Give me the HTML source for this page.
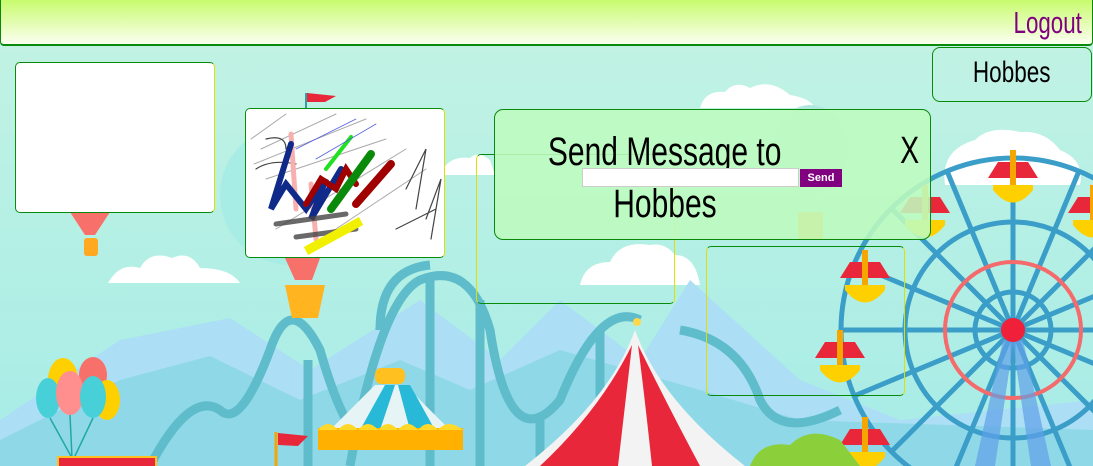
<!DOCTYPE html>
<html><head><meta charset="utf-8"><style>
html,body{margin:0;padding:0;width:1093px;height:466px;overflow:hidden;font-family:"Liberation Sans",sans-serif}
#bg{position:absolute;left:0;top:0;display:block}
.hdr{position:absolute;left:0;top:0;width:1093px;height:46px;box-sizing:border-box;border:1px solid #0a8a0a;border-top:none;border-bottom:2px solid #0a8a0a;border-radius:0 0 4px 4px;background:linear-gradient(#c8fb6e,#fbfff0)}
.logout{position:absolute;right:10px;top:5px;font-size:31px;color:#800080;transform:scaleX(.72);transform-origin:right}
.box{position:absolute;border:1px solid #0a8a0a;border-radius:5px;box-sizing:border-box}
.hand{font-family:"Liberation Sans",sans-serif;transform:scaleX(.75);display:inline-block}
</style></head><body>
<svg id="bg" width="1093" height="466" viewBox="0 0 1093 466">
<defs><linearGradient id="sky" x1="0" y1="0" x2="0" y2="1"><stop offset="0" stop-color="#c4f3e4"/><stop offset="1" stop-color="#a6ece6"/></linearGradient></defs>
<rect width="1093" height="466" fill="url(#sky)"/>
<circle cx="290" cy="195" r="70" fill="#a8ece6"/>
<g fill="#fff">
<path d="M108 283 Q120 262 140 268 Q150 250 172 258 Q190 250 200 268 Q230 268 240 283Z"/>
<path d="M580 285 Q585 262 610 262 Q620 240 650 245 Q665 242 675 255 Q695 255 700 285Z"/>
<path d="M700 108 Q705 90 725 92 Q735 80 750 88 Q770 78 790 95 Q810 98 815 108Z"/>
<path d="M945 185 Q940 150 975 140 Q990 125 1020 132 Q1045 130 1060 150 Q1085 160 1080 185Z"/>
<path d="M440 175 Q448 155 470 158 Q478 150 490 160 L495 175Z"/>
</g>
<path d="M0 466 L0 420 L120 340 L230 318 L310 370 L420 300 L500 360 L560 300 L640 360 L690 280 L800 380 L900 420 L1093 400 L1093 466Z" fill="#acdff5"/>
<path d="M0 466 L0 440 L120 380 L210 356 L300 400 L400 360 L470 390 L560 350 L700 390 L800 420 L1093 430 L1093 466Z" fill="#8fd8e8"/>
<g fill="none" stroke="#5fbccb" stroke-width="9">
<path d="M150 466 Q190 390 220 410 Q240 430 270 350 Q290 290 320 350 Q340 420 360 440"/>
<path d="M350 466 Q380 300 420 280 Q470 260 490 330 Q510 460 560 400 Q600 300 640 320"/>
<path d="M380 330 Q380 270 430 265"/>
<path d="M680 330 Q740 340 760 400 Q780 440 840 410"/>
<path d="M430 280 L430 466 M480 300 L480 466 M308 360 L308 466 M540 420 L540 466 M600 330 L600 466"/>
</g>
<g stroke="#3a9ec8" stroke-width="5" fill="none">
<circle cx="1013" cy="330" r="172"/>
<circle cx="1013" cy="330" r="108"/>
<circle cx="1013" cy="330" r="38"/>
<path d="M1013 158V502M841 330H1185M891 208L1135 452M891 452L1135 208M947 171L1079 489M947 489L1079 171M854 264L1172 396M854 396L1172 264"/>
</g>
<circle cx="1013" cy="330" r="68" fill="none" stroke="#f56a6a" stroke-width="4"/>
<path d="M1003 340 L975 466 L995 466 L1013 345 L1031 466 L1051 466 L1023 340Z" fill="#5fa0e8" opacity=".7"/>
<circle cx="1013" cy="330" r="12" fill="#f0203a"/>
<g>
<g transform="translate(1013,150)"><path d="M-25 28 L-15 12 L15 12 L25 28Z" fill="#e8283a"/><rect x="-3" y="0" width="6" height="45" fill="#f5a600"/><path d="M-20 40 Q0 65 20 40 L20 35 L-20 35Z" fill="#ffd000"/></g>
<g transform="translate(865,250)"><path d="M-25 28 L-15 12 L15 12 L25 28Z" fill="#e8283a"/><rect x="-3" y="0" width="6" height="45" fill="#f5a600"/><path d="M-20 40 Q0 65 20 40 L20 35 L-20 35Z" fill="#ffd000"/></g>
<g transform="translate(840,330)"><path d="M-25 28 L-15 12 L15 12 L25 28Z" fill="#e8283a"/><rect x="-3" y="0" width="6" height="45" fill="#f5a600"/><path d="M-20 40 Q0 65 20 40 L20 35 L-20 35Z" fill="#ffd000"/></g>
<g transform="translate(865,417)"><path d="M-25 28 L-15 12 L15 12 L25 28Z" fill="#e8283a"/><rect x="-3" y="0" width="6" height="45" fill="#f5a600"/><path d="M-20 40 Q0 65 20 40 L20 35 L-20 35Z" fill="#ffd000"/></g>
<g transform="translate(925,185)"><path d="M-25 28 L-15 12 L15 12 L25 28Z" fill="#e8283a"/><rect x="-3" y="0" width="6" height="45" fill="#f5a600"/><path d="M-20 40 Q0 65 20 40 L20 35 L-20 35Z" fill="#ffd000"/></g>
<g transform="translate(1093,185)"><path d="M-25 28 L-15 12 L15 12 L25 28Z" fill="#e8283a"/><rect x="-3" y="0" width="6" height="45" fill="#f5a600"/><path d="M-20 40 Q0 65 20 40 L20 35 L-20 35Z" fill="#ffd000"/></g>
</g>
<path d="M750 466 Q760 440 790 445 Q810 425 840 440 L860 466Z" fill="#8bcf3a"/>
<path d="M525 466 Q610 400 635 330 Q660 400 745 466Z" fill="#f3f3f3"/>
<path d="M540 466 Q600 410 632 345 L618 466Z M652 466 Q645 400 638 345 Q670 410 700 466Z" fill="#e8283a"/>
<circle cx="637" cy="322" r="4" fill="#ffd84a"/>
<path d="M330 430 L375 385 L405 385 L450 430Z" fill="#e6f4f6"/>
<path d="M360 430 L385 385 L395 385 L380 430Z M410 430 L398 385 L410 385 L435 430Z" fill="#28b8d8"/>
<rect x="375" y="368" width="30" height="16" rx="6" fill="#ffc020"/>
<rect x="318" y="428" width="145" height="22" fill="#ffb000"/>
<path d="M318 430 q10 -12 20 0 q10 -12 20 0 q10 -12 20 0 q10 -12 20 0 q10 -12 20 0 q10 -12 20 0 q10 -12 25 0Z" fill="#ffd82a"/>
<g>
<ellipse cx="63" cy="380" rx="15" ry="22" fill="#ffd000"/><ellipse cx="93" cy="375" rx="14" ry="18" fill="#f8706a"/>
<ellipse cx="107" cy="400" rx="13" ry="20" fill="#ffd000"/>
<ellipse cx="48" cy="398" rx="12" ry="20" fill="#48d0d8"/><ellipse cx="70" cy="393" rx="14" ry="22" fill="#ff8f8f"/><ellipse cx="93" cy="397" rx="13" ry="21" fill="#48d0d8"/>
<path d="M50 418 L72 458 M70 415 L72 458 M93 418 L74 458" stroke="#20a8a8" stroke-width="1.5"/>
<rect x="58" y="457" width="98" height="10" fill="#e8283a" stroke="#ffc020" stroke-width="2"/>
</g>
<path d="M276 432 V466" stroke="#f5a600" stroke-width="3"/><path d="M278 433 L308 436 L298 446 L278 445Z" fill="#e8283a"/>
<path d="M70 212 L110 212 L95 235 L85 235Z" fill="#f8706a"/><rect x="84" y="238" width="14" height="18" rx="3" fill="#ffa820"/>
<path d="M285 258 L320 258 L312 280 L295 280Z" fill="#f8706a"/><path d="M285 285 L325 285 L318 318 L292 318Z" fill="#ffb420"/>
<path d="M306 93 V110" stroke="#30a0a0" stroke-width="2"/><path d="M307 93 L336 96 L325 102 L307 102Z" fill="#e8283a"/>
<ellipse cx="810" cy="150" rx="38" ry="45" fill="#b0e8e0"/><rect x="798" y="212" width="25" height="28" fill="#ffb420"/>
</svg>

<div class="hdr"><span class="logout">Logout</span></div>
<div class="box" style="left:932px;top:47px;width:160px;height:55px;border-radius:8px;text-align:center;font-size:30px;line-height:50px"><span class="hand">Hobbes</span></div>
<div class="box" style="left:15px;top:62px;width:200px;height:151px;background:#fff;border-right-color:#e0e000"></div>
<div class="box" style="left:245px;top:108px;width:200px;height:150px;background:#fff;border-right-color:#e0e000;overflow:hidden">
<svg width="200" height="150" style="position:absolute;left:0;top:0">
<g fill="none" stroke-linecap="round">
<path d="M5 30 L40 5 M15 40 L90 5 M8 55 L120 10 M20 70 L140 30 M30 120 L160 40 M60 140 L180 60" stroke="#aaa" stroke-width="1"/>
<path d="M20 30 Q40 25 40 40 M10 60 Q25 50 50 55 M160 80 L180 40 L170 100 M180 110 L195 70 L185 130 M150 120 L190 100" stroke="#444" stroke-width="1.2"/>
<path d="M45 25 L50 100 M65 75 L70 130" stroke="#f7b0b0" stroke-width="5"/>
<path d="M45 35 L25 100 L40 75 L60 100 L80 70 L65 110 L95 60" stroke="#102a8a" stroke-width="6"/>
<path d="M60 95 L75 70 L90 80 L100 60 L110 75" stroke="#a00000" stroke-width="6"/>
<path d="M85 100 L125 45" stroke="#0a8a0a" stroke-width="8"/><path d="M110 95 L145 55" stroke="#a00000" stroke-width="8"/>
<path d="M80 60 L105 28" stroke="#20e020" stroke-width="4"/>
<path d="M30 115 L100 105 M50 128 L110 120" stroke="#444" stroke-width="5" opacity=".8"/>
<path d="M60 142 L115 112" stroke="#f0f000" stroke-width="9" stroke-linecap="butt"/>
<path d="M50 40 L110 10 M70 50 L130 15" stroke="#5060e0" stroke-width=".8"/>
</g></svg></div>
<div class="box" style="left:476px;top:154px;width:199px;height:150px;border-right-color:#e0e000;border-left-color:#e0e000"></div>
<div class="box" style="left:706px;top:246px;width:199px;height:150px;border-right-color:#e0e000;border-left-color:#e0e000"></div>

<div class="box" style="left:494px;top:109px;width:437px;height:131px;border-radius:9px;background:rgba(190,250,190,.88)">
<div style="position:absolute;left:10px;top:16px;width:320px;text-align:center;font-size:40px;line-height:52px;color:#000"><span class="hand" style="white-space:nowrap">Send Message to</span><br><span class="hand">Hobbes</span></div>
<div style="position:absolute;left:87px;top:58px;width:217px;height:19px;background:#fff;border:1px solid #ccc;box-sizing:border-box"></div>
<div style="position:absolute;left:305px;top:59px;width:42px;height:18px;background:#800080;color:#fff;font-size:11px;font-weight:bold;text-align:center;line-height:18px">Send</div>
<div style="position:absolute;left:402px;top:20px;font-size:38px"><span class="hand">X</span></div>
</div>
</body></html>
